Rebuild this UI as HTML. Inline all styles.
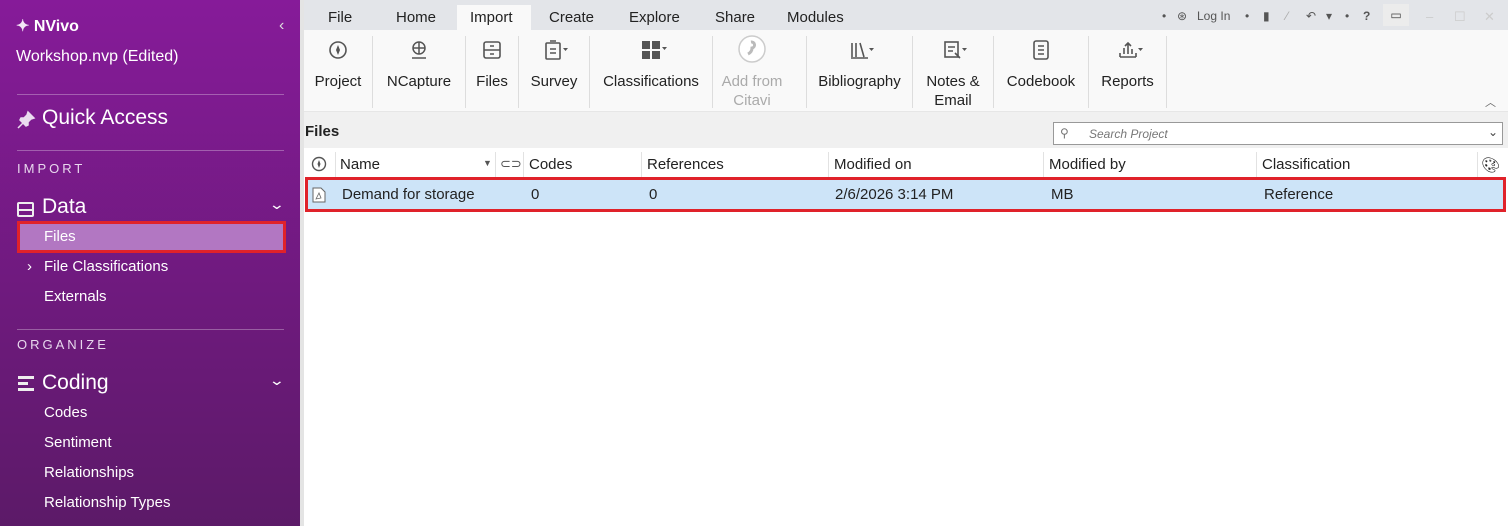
<!DOCTYPE html>
<html><head><meta charset="utf-8"><style>
*{box-sizing:border-box;margin:0;padding:0}
body{width:1508px;height:526px;overflow:hidden;font-family:"Liberation Sans",sans-serif;background:#fff;position:relative}
.sb{position:absolute;left:0;top:0;width:300px;height:526px;background:linear-gradient(#861b99,#5c1a68);color:#fff}
.sb div{position:absolute;white-space:nowrap}
.hr{left:17px;width:267px;height:1px;background:rgba(255,255,255,.3)}
.cap{left:17px;font-size:13px;letter-spacing:3px;color:#e8d8ee}
.it{left:44px;font-size:15px}
.strip{position:absolute;left:300px;top:0;width:4px;height:526px;background:#e4e4e4}
.tabs{position:absolute;left:304px;top:0;right:0;height:30px;background:#e3e5e9;font-size:15px;color:#222}
.tabs span{position:absolute;top:9px}
.tabs b{position:absolute;top:9px;font-weight:normal;font-size:12px;color:#555}
.rib{position:absolute;left:304px;top:30px;right:0;height:82px;background:#f9f9f9;border-bottom:1px solid #e6e6e6}
.btn{position:absolute;top:0;height:80px;text-align:center;font-size:15px;color:#222;line-height:19px}
.btn .l{position:absolute;left:0;right:0;top:42px}
.btn svg{position:absolute;top:10px;left:50%;margin-left:-10px}
.sep{position:absolute;top:6px;width:1px;height:72px;background:#ddd}
.gap{position:absolute;left:304px;top:112px;right:0;height:36px;background:#f0f0f0}
.th{position:absolute;left:304px;top:148px;right:0;height:30px;background:#fff;font-size:15px;color:#222}
.th span{position:absolute;top:8px}
.th i{position:absolute;top:4px;width:1px;height:26px;background:#e2e2e2}
.row{position:absolute;left:305px;top:177px;width:1201px;height:35px;background:#cde4f8;border:3px solid #e0222a;font-size:15px;color:#222}
.row span{position:absolute;top:6px}
</style></head><body>
<div class="sb">
 <div style="left:16px;top:16px;font-size:16px;font-weight:bold"><span style="color:#f3e6f6">✦</span> NVivo</div>
 <div style="left:279px;top:17px;font-size:16px;color:#ddd">‹</div>
 <div style="left:16px;top:48px;font-size:16px">Workshop.nvp (Edited)</div>
 <div class="hr" style="top:94px"></div>
 <svg width="20" height="20" style="position:absolute;left:16px;top:110px"><path d="M12 2l6 6-3 1-3 3 0 3-2 1-6-6 1-2 3 0 3-3z M7 13l-5 5" fill="#eadcef" stroke="#eadcef" stroke-width="1.5"/></svg>
 <div style="left:42px;top:106px;font-size:21px">Quick Access</div>
 <div class="hr" style="top:150px"></div>
 <div class="cap" style="top:161px">IMPORT</div>
 <div style="left:17px;top:202px;width:17px;height:15px;border:2px solid #eee;border-radius:2px"></div>
 <div style="left:17px;top:209px;width:17px;height:2px;background:#eee"></div>
 <div style="left:42px;top:195px;font-size:21px">Data</div>
 <div style="left:271px;top:196px;font-size:14px;transform:scaleX(1.4)">⌄</div>
 <div style="left:17px;top:221px;width:269px;height:32px;border:3px solid #e0222a;background:#b277c2"></div>
 <div class="it" style="top:228px">Files</div>
 <div style="left:27px;top:258px;font-size:15px">›</div>
 <div class="it" style="top:258px">File Classifications</div>
 <div class="it" style="top:288px">Externals</div>
 <div class="hr" style="top:329px"></div>
 <div class="cap" style="top:337px">ORGANIZE</div>
 <div style="left:18px;top:376px;width:16px;height:3px;background:#eee"></div>
 <div style="left:18px;top:382px;width:10px;height:3px;background:#eee"></div>
 <div style="left:18px;top:388px;width:16px;height:3px;background:#eee"></div>
 <div style="left:42px;top:371px;font-size:21px">Coding</div>
 <div style="left:271px;top:372px;font-size:14px;transform:scaleX(1.4)">⌄</div>
 <div class="it" style="top:404px">Codes</div>
 <div class="it" style="top:434px">Sentiment</div>
 <div class="it" style="top:464px">Relationships</div>
 <div class="it" style="top:494px">Relationship Types</div>
</div>
<div class="strip"></div>
<div class="tabs">
 <span style="left:24px">File</span><span style="left:92px">Home</span>
 <div style="position:absolute;left:153px;top:5px;width:74px;height:25px;background:#f9f9f9"></div>
 <span style="left:166px">Import</span><span style="left:245px">Create</span><span style="left:325px">Explore</span><span style="left:411px">Share</span><span style="left:483px">Modules</span>
 <b style="left:858px">•</b><b style="left:873px">⊛</b><b style="left:893px">Log In</b><b style="left:941px">•</b><b style="left:959px">▮</b><b style="left:982px;color:#aaa">⁄</b><b style="left:1002px">↶</b><b style="left:1022px">▾</b><b style="left:1041px">•</b><b style="left:1059px;font-weight:bold">?</b>
 <div style="position:absolute;left:1079px;top:4px;width:26px;height:22px;background:#ececec;font-size:12px;text-align:center;line-height:22px;color:#444">▭</div>
 <span style="left:1122px;color:#ccc;font-size:13px">–</span><span style="left:1150px;color:#ccc;font-size:13px">☐</span><span style="left:1180px;color:#ccc;font-size:13px">✕</span>
</div>
<div class="rib">
 <div class="btn" style="left:0;width:68px"><svg width="20" height="20"><circle cx="10" cy="10" r="8" fill="none" stroke="#555" stroke-width="1.6"/><path d="M10 5l2 5-2 5-2-5z" fill="#555"/></svg><div class="l">Project</div></div>
 <div class="sep" style="left:68px"></div>
 <div class="btn" style="left:69px;width:92px"><svg width="20" height="20"><circle cx="10" cy="8" r="6" fill="none" stroke="#555" stroke-width="1.5"/><path d="M4 8h12M10 2v12M3 18h14" stroke="#555" stroke-width="1.5"/></svg><div class="l">NCapture</div></div>
 <div class="sep" style="left:161px"></div>
 <div class="btn" style="left:162px;width:52px"><svg width="20" height="20"><rect x="2" y="2" width="16" height="16" rx="2" fill="none" stroke="#555" stroke-width="1.6"/><path d="M2 10h16M8 6h4M8 14h4" stroke="#555" stroke-width="1.6"/></svg><div class="l">Files</div></div>
 <div class="sep" style="left:214px"></div>
 <div class="btn" style="left:215px;width:70px"><svg width="26" height="20"><rect x="2" y="3" width="14" height="16" rx="1" fill="none" stroke="#555" stroke-width="1.6"/><path d="M6 9h6M6 13h6M6 1h6" stroke="#555" stroke-width="1.6"/><path d="M19 8h5l-2.5 3z" fill="#555"/></svg><div class="l">Survey</div></div>
 <div class="sep" style="left:285px"></div>
 <div class="btn" style="left:286px;width:122px"><svg width="26" height="20"><rect x="1" y="1" width="8" height="8" fill="#555"/><rect x="11" y="1" width="8" height="8" fill="#555"/><rect x="1" y="11" width="8" height="8" fill="#555"/><rect x="11" y="11" width="8" height="8" fill="#555"/><path d="M21 7h5l-2.5 3z" fill="#555"/></svg><div class="l">Classifications</div></div>
 <div class="sep" style="left:408px"></div>
 <div class="btn" style="left:409px;width:78px;color:#aaa"><svg width="30" height="30" style="top:4px;margin-left:-15px"><circle cx="15" cy="15" r="13" fill="#fff" stroke="#ccc" stroke-width="1.5"/><path d="M14 8a3 3 0 1 1 1 6c0 3-2 5-4 6" stroke="#bbb" stroke-width="3" fill="none"/></svg><div class="l">Add from<br>Citavi</div></div>
 <div class="sep" style="left:502px"></div>
 <div class="btn" style="left:503px;width:105px"><svg width="26" height="20"><path d="M2 3v14M6 3v14M10 3l4 14M1 18h17" stroke="#555" stroke-width="1.6" fill="none"/><path d="M19 8h5l-2.5 3z" fill="#555"/></svg><div class="l">Bibliography</div></div>
 <div class="sep" style="left:608px"></div>
 <div class="btn" style="left:609px;width:80px"><svg width="26" height="20"><rect x="2" y="2" width="13" height="15" fill="none" stroke="#555" stroke-width="1.6"/><path d="M5 7h7M5 11h5M12 13l5 5" stroke="#555" stroke-width="1.6"/><path d="M19 8h5l-2.5 3z" fill="#555"/></svg><div class="l">Notes &amp;<br>Email</div></div>
 <div class="sep" style="left:689px"></div>
 <div class="btn" style="left:690px;width:94px"><svg width="20" height="20"><rect x="3" y="1" width="14" height="18" rx="2" fill="none" stroke="#555" stroke-width="1.6"/><path d="M7 6h6M7 10h6M7 14h6" stroke="#555" stroke-width="1.6"/></svg><div class="l">Codebook</div></div>
 <div class="sep" style="left:784px"></div>
 <div class="btn" style="left:785px;width:77px"><svg width="26" height="20"><path d="M2 17h16M2 13v4M18 13v4M6 14V8M10 14V3M14 14V9M7 6l3-3 3 3" stroke="#555" stroke-width="1.6" fill="none"/><path d="M20 8h5l-2.5 3z" fill="#555"/></svg><div class="l">Reports</div></div>
 <div class="sep" style="left:862px"></div>
 <div style="position:absolute;right:12px;top:64px;font-size:11px;color:#666">︿</div>
</div>
<div class="gap">
 <div style="position:absolute;left:1px;top:11px;font-size:15px;font-weight:bold;color:#222">Files</div>
 <div style="position:absolute;left:749px;top:10px;width:450px;height:23px;background:#fff;border:1px solid #999;font-size:12px;color:#777">
  <span style="position:absolute;left:6px;top:3px">⚲</span><span style="position:absolute;left:35px;top:4px;font-style:italic">Search Project</span><span style="position:absolute;right:4px;top:2px;color:#444">⌄</span></div>
</div>
<div class="th">
 <svg width="16" height="16" style="position:absolute;left:7px;top:8px"><circle cx="8" cy="8" r="6.5" fill="none" stroke="#555" stroke-width="1.4"/><path d="M8 4l1.5 4L8 12 6.5 8z" fill="#555"/></svg>
 <i style="left:31px"></i><span style="left:36px">Name</span><span style="left:179px;font-size:9px;top:10px;color:#555">▼</span>
 <i style="left:191px"></i><span style="left:196px;font-size:13px;color:#555">⊂⊃</span>
 <i style="left:219px"></i><span style="left:225px">Codes</span>
 <i style="left:337px"></i><span style="left:343px">References</span>
 <i style="left:524px"></i><span style="left:530px">Modified on</span>
 <i style="left:739px"></i><span style="left:745px">Modified by</span>
 <i style="left:952px"></i><span style="left:958px">Classification</span>
 <i style="left:1173px"></i><span style="left:1177px;font-size:15px">🎨︎</span>
</div>
<div class="row">
 <svg width="14" height="16" style="position:absolute;left:4px;top:7px"><path d="M1 1h8l4 4v10H1z" fill="#fff" stroke="#666"/><path d="M4 12l3-6 2 5z" fill="none" stroke="#666" stroke-width=".8"/></svg>
 <span style="left:34px">Demand for storage</span><span style="left:223px">0</span><span style="left:341px">0</span><span style="left:527px">2/6/2026 3:14 PM</span><span style="left:743px">MB</span><span style="left:956px">Reference</span>
</div>
</body></html>
